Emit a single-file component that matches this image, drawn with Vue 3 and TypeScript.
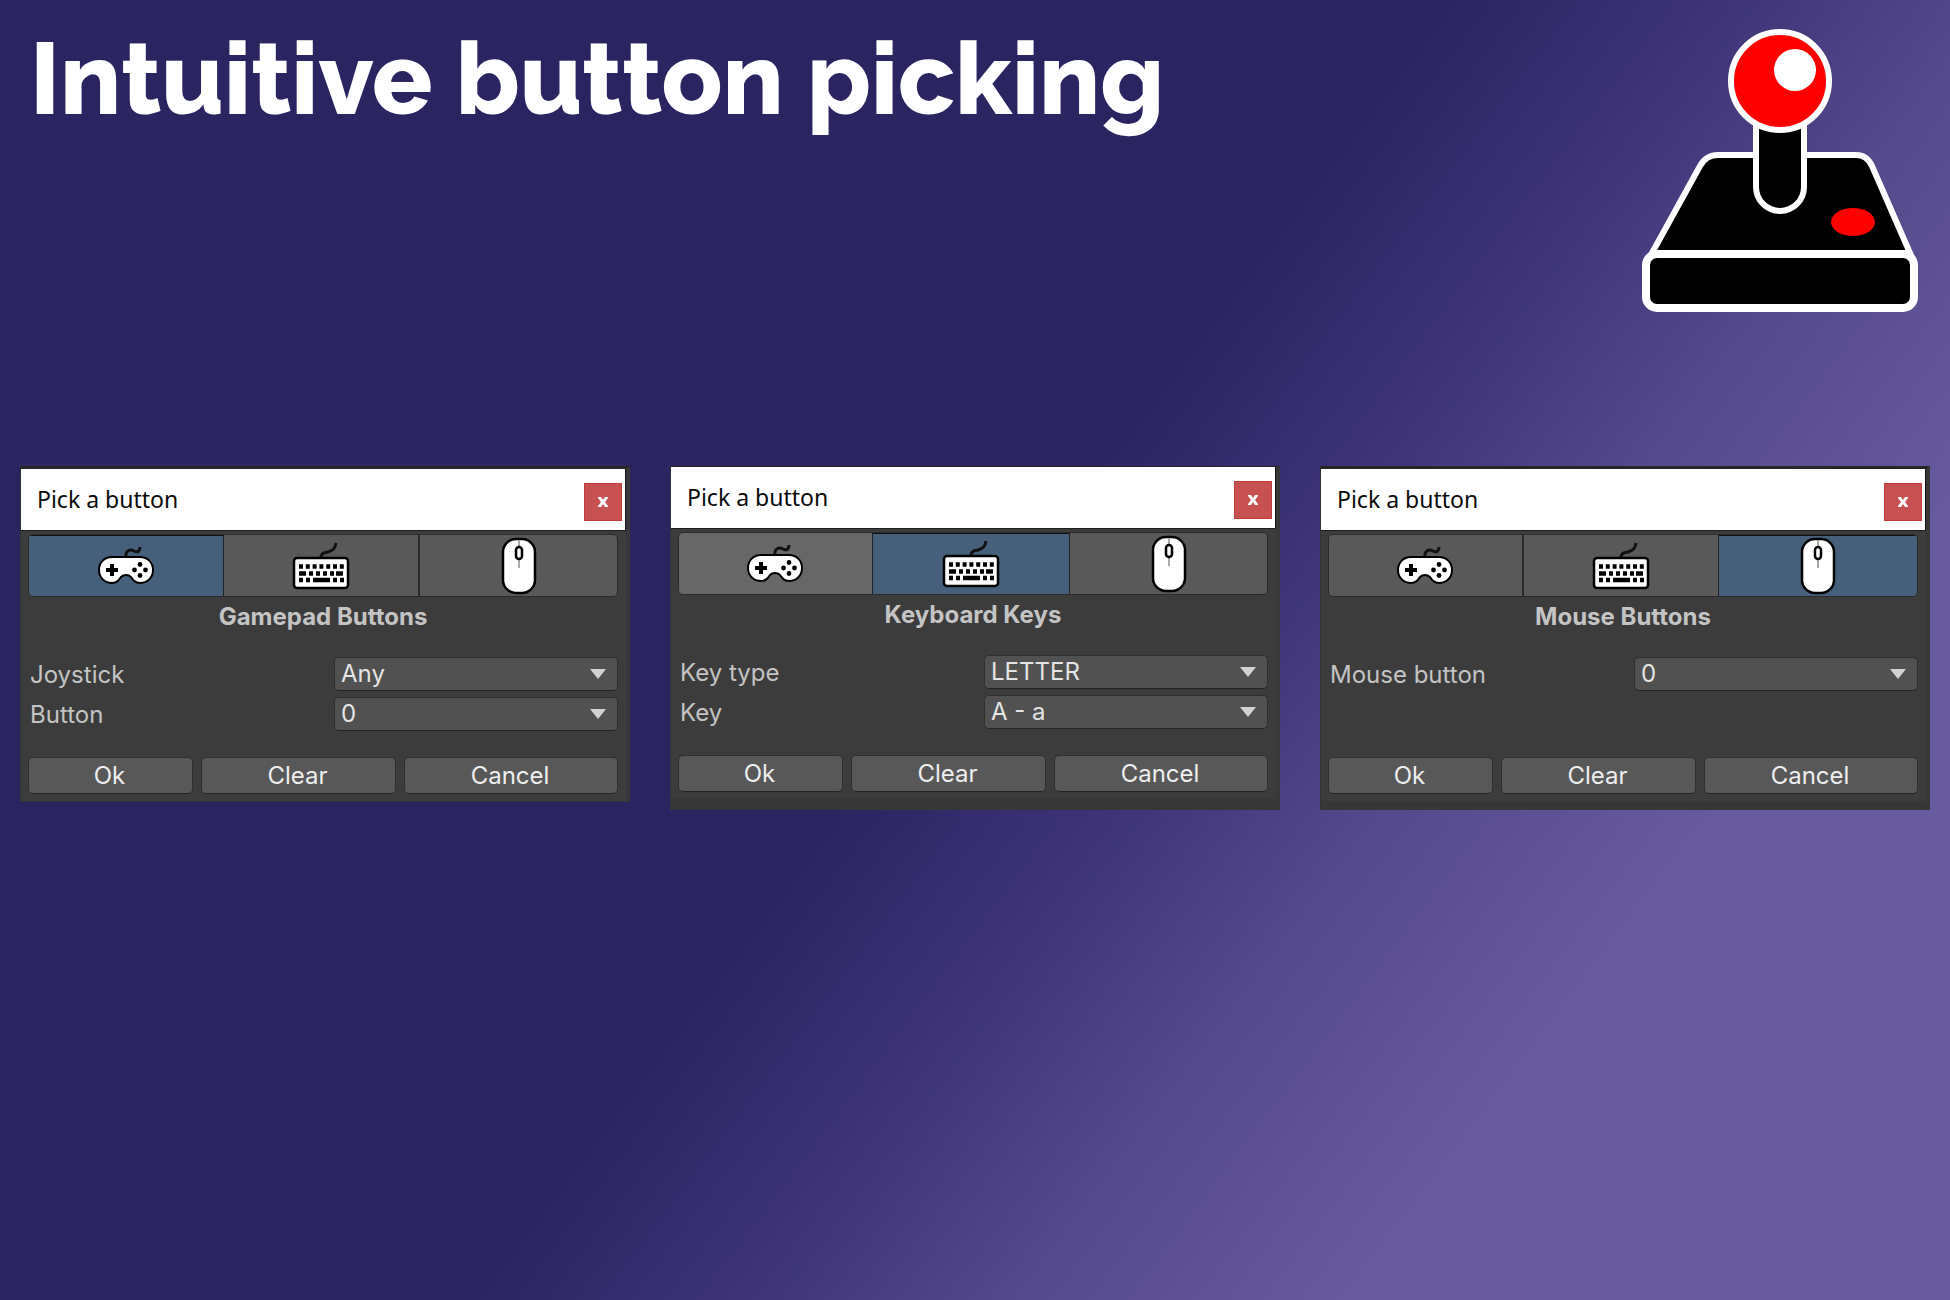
<script setup lang="ts">
import { ref } from 'vue'

type Device = 'gamepad' | 'keyboard' | 'mouse'

interface Field {
  label: string
  options: string[]
}

interface Picker {
  id: string
  active: Device
  hovered?: Device
  heading: string
  fields: Field[]
  frame: string
}

const devices: Device[] = ['gamepad', 'keyboard', 'mouse']
const actions = ['Ok', 'Clear', 'Cancel']

const pickers = ref<Picker[]>([
  {
    id: 'pad',
    active: 'gamepad',
    heading: 'Gamepad Buttons',
    frame: 'short',
    fields: [
      { label: 'Joystick', options: ['Any'] },
      { label: 'Button', options: ['0'] },
    ],
  },
  {
    id: 'key',
    active: 'keyboard',
    hovered: 'gamepad',
    heading: 'Keyboard Keys',
    frame: 'raised',
    fields: [
      { label: 'Key type', options: ['LETTER'] },
      { label: 'Key', options: ['A - a'] },
    ],
  },
  {
    id: 'mouse',
    active: 'mouse',
    heading: 'Mouse Buttons',
    frame: 'full',
    fields: [{ label: 'Mouse button', options: ['0'] }],
  },
])
</script>

<template>
  <main class="page">
    <header class="hero">
      <h1>Intuitive button picking</h1>
      <svg class="logo" viewBox="0 0 280 288" aria-hidden="true">
        <path d="M12 226 L60 139 Q66 128 78 128 L216 128 Q227 128 232 139 L270 226 Z" fill="#000" stroke="#fff" stroke-width="6" />
        <rect x="6" y="227" width="268" height="54" rx="11" fill="#000" stroke="#fff" stroke-width="8" />
        <path d="M116 90 V160 A24 24 0 0 0 164 160 V90 Z" fill="#000" stroke="#fff" stroke-width="6" />
        <circle cx="140" cy="54" r="49" fill="#f00" stroke="#fff" stroke-width="6" />
        <circle cx="155" cy="43" r="21" fill="#fff" />
        <ellipse cx="213" cy="195" rx="22" ry="14" fill="#f00" />
      </svg>
    </header>

    <div class="pickers">
      <section v-for="p in pickers" :key="p.id" class="window" :class="p.frame">
        <div class="titlebar">
          <span class="title">Pick a button</span>
          <button class="close" type="button" aria-label="Close">
            <svg viewBox="0 0 12 12" aria-hidden="true">
              <path d="M1 1H4L6 4L8 1H11V2L8 6L11 10V11H8L6 8L4 11H1V10L4 6L1 2Z" fill="#fff" />
            </svg>
          </button>
        </div>
        <div class="body">
          <div class="tabs">
            <button
              v-for="d in devices"
              :key="d"
              type="button"
              class="tab"
              :class="{ active: p.active === d, hovered: p.hovered === d }"
              :aria-label="d"
              :aria-pressed="p.active === d"
              @click="p.active = d"
            >
              <svg v-if="d === 'gamepad'" class="icon pad" viewBox="0 0 58 40" aria-hidden="true">
                <path d="M29 12 C28 4 33 3 37 5 C41 7 43 5 43 1" fill="none" stroke="#111" stroke-width="3" />
                <path d="M15 11 H43 C51 11 56 17 56 24 C56 32 50 37 43 37 C38 37 36 34 34 31 Q32 29 29 29 Q26 29 24 31 C22 34 20 37 15 37 C8 37 2 32 2 24 C2 17 7 11 15 11 Z" fill="#fff" stroke="#000" stroke-width="2" />
                <path d="M9 24 H21 M15 18 V30" stroke="#000" stroke-width="4" />
                <g fill="#000">
                  <circle cx="43" cy="18.500" r="2.400" /><circle cx="43" cy="29.500" r="2.400" />
                  <circle cx="37.500" cy="24" r="2.400" /><circle cx="48.500" cy="24" r="2.400" />
                </g>
              </svg>
              <svg v-else-if="d === 'keyboard'" class="icon board" viewBox="0 0 58 48" aria-hidden="true">
                <path d="M29 16 C29 11 32 11 36 10 C42 8 43 6 44 1" fill="none" stroke="#111" stroke-width="3" />
                <rect x="2" y="16" width="54" height="30" rx="3" fill="#fff" stroke="#000" stroke-width="2.500" />
                <g fill="none" stroke="#000" stroke-width="4.400">
                  <path d="M7 24.500 H52" stroke-dasharray="4 2.800" />
                  <path d="M7 31.500 H14 M17 31.500 H21 M24 31.500 H28 M31 31.500 H35 M38 31.500 H42 M44 31.500 H51" />
                  <path d="M7 38 H11 M14 38 H18 M21 38 H38 M41 38 H45 M48 38 H52" />
                </g>
              </svg>
              <svg v-else class="icon mouse" viewBox="0 0 36 58" aria-hidden="true">
                <rect x="2" y="2" width="32" height="54" rx="13" fill="#fff" stroke="#000" stroke-width="2.500" />
                <path d="M18 3 V31" stroke="#aaa" stroke-width="2" />
                <rect x="15" y="10" width="6" height="12" rx="3" fill="#fff" stroke="#000" stroke-width="2.500" />
              </svg>
            </button>
          </div>
          <h2>{{ p.heading }}</h2>
          <div class="fields">
            <div v-for="(f, i) in p.fields" :key="f.label" class="field">
              <label :for="`${p.id}-${i}`">{{ f.label }}</label>
              <div class="dropdown">
                <select :id="`${p.id}-${i}`">
                  <option v-for="o in f.options" :key="o">{{ o }}</option>
                </select>
                <svg class="arrow" viewBox="0 0 16 10" aria-hidden="true"><path d="M0 0H16L8 10Z" fill="#d2d2d2" /></svg>
              </div>
            </div>
          </div>
          <div class="actions">
            <button v-for="a in actions" :key="a" type="button" class="action">{{ a }}</button>
          </div>
        </div>
      </section>
    </div>
  </main>
</template>

<style>
body {
  margin: 0;
}
</style>

<style scoped>
* {
  box-sizing: border-box;
}
.page {
  min-height: 100vh;
  background: linear-gradient(127deg, #2a2461 0%, #2a2461 49%, #40367a 60%, #54498a 68%, #685a9f 80%, #685a9f 100%);
  font-family: Inter, 'Liberation Sans', sans-serif;
  color: #c4c4c4;
}
.hero {
  display: flex;
  justify-content: space-between;
  align-items: flex-start;
  height: 466px;
  padding: 27px 30px 0;
}
h1 {
  margin: 0;
  font-family: Raleway, Inter, sans-serif;
  font-size: 100px;
  line-height: 104px;
  font-weight: 800;
  color: #fff;
}
.logo {
  width: 280px;
  height: 288px;
}
.pickers {
  display: grid;
  grid-template-columns: repeat(3, minmax(0, 1fr));
  gap: 40px;
  padding: 0 20px;
  align-items: start;
}
.window {
  background: #3c3c3c;
  border: 1px solid #333;
  border-top: 3px solid #272727;
  border-right: 4px solid #383838;
}
.raised {
  border-top-width: 1px;
}
.full {
  border-bottom: 9px solid #373737;
}
.raised {
  border-bottom: 11px solid #373737;
}
.titlebar {
  display: flex;
  align-items: center;
  justify-content: space-between;
  height: 61px;
  padding: 0 3px 2px 16px;
  background: #fff;
  border-right: 1px solid #111;
}
.title {
  font-family: 'Noto Sans', 'Open Sans', sans-serif;
  font-size: 23px;
  line-height: 32px;
  color: #0a0a0a;
}
.close {
  display: grid;
  place-items: center;
  width: 38px;
  height: 38px;
  margin-top: 6px;
  padding: 0;
  border: 1px solid #c23b3b;
  background: #c75050;
}
.close svg {
  width: 12px;
  height: 12px;
}
.body {
  padding: 3px 8px 7px 7px;
  border-top: 1px solid #1f1f1f;
}
.tabs {
  display: grid;
  grid-template-columns: 193fr 195fr 197fr;
  height: 63px;
  border: 1px solid #2b2b2b;
  border-radius: 5px;
  background: #2b2b2b;
  gap: 2px;
  overflow: hidden;
}
.tab {
  display: grid;
  place-items: center;
  padding: 0;
  border: 0;
  background: #595959;
}
.tab.hovered {
  background: #676767;
}
.tab.active {
  background: #46607c;
  box-shadow: inset 0 1px 0 #111;
}
.tab.active:not(:last-child) {
  margin-right: -2px;
  border-right: 1px solid #222;
}
.tab.active:not(:first-child) {
  margin-left: -2px;
  border-left: 1px solid #222;
}
.pad {
  width: 58px;
  height: 40px;
}
.board {
  width: 58px;
  height: 48px;
}
.mouse {
  width: 36px;
  height: 58px;
}
h2 {
  margin: 4px 0 24px;
  font-size: 24px;
  line-height: 32px;
  font-weight: 700;
  text-align: center;
}
.fields {
  display: flex;
  flex-direction: column;
  gap: 6px;
  min-height: 74px;
}
.field {
  display: grid;
  grid-template-columns: 306fr 284fr;
  align-items: center;
  height: 34px;
}
.field label {
  padding: 2px 0 0 2px;
  font-size: 24px;
  line-height: 32px;
}
.dropdown {
  display: grid;
  align-items: center;
}
.dropdown > * {
  grid-area: 1 / 1;
}
select {
  appearance: none;
  width: 100%;
  height: 34px;
  padding: 0 30px 0 6px;
  border: 1px solid #303030;
  border-bottom-color: #242424;
  border-radius: 5px;
  background: #515151;
  color: #e4e4e4;
  font: 24px/30px Inter, 'Liberation Sans', sans-serif;
}
.arrow {
  justify-self: end;
  width: 16px;
  height: 10px;
  margin-right: 12px;
  pointer-events: none;
}
.actions {
  display: grid;
  grid-template-columns: 165fr 195fr 214fr;
  gap: 8px;
  margin-top: 26px;
}
.action {
  height: 37px;
  padding: 0 2px 0 0;
  border: 1px solid #303030;
  border-bottom-color: #242424;
  border-radius: 5px;
  background: #585858;
  color: #eee;
  font: 24px/32px Inter, 'Liberation Sans', sans-serif;
}
</style>
